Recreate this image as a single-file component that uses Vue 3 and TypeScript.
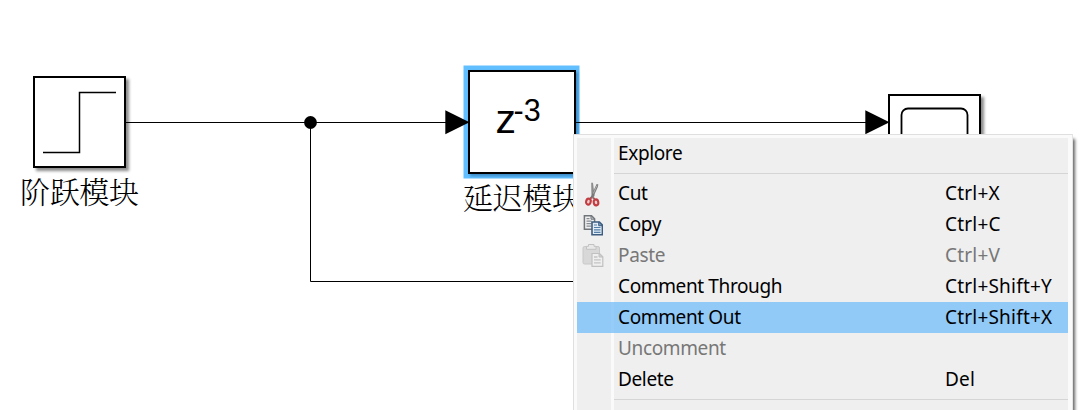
<script setup lang="ts">
interface MenuEntry {
  label: string
  shortcut?: string
  icon?: 'cut' | 'copy' | 'paste'
  disabled?: boolean
  active?: boolean
}

const groups: MenuEntry[][] = [
  [{ label: 'Explore' }],
  [
    { label: 'Cut', shortcut: 'Ctrl+X', icon: 'cut' },
    { label: 'Copy', shortcut: 'Ctrl+C', icon: 'copy' },
    { label: 'Paste', shortcut: 'Ctrl+V', icon: 'paste', disabled: true },
    { label: 'Comment Through', shortcut: 'Ctrl+Shift+Y' },
    { label: 'Comment Out', shortcut: 'Ctrl+Shift+X', active: true },
    { label: 'Uncomment', disabled: true },
    { label: 'Delete', shortcut: 'Del' },
  ],
]
</script>

<template>
  <main class="canvas">
    <svg class="diagram" width="1083" height="410" viewBox="0 0 1083 410">
      <defs>
        <filter id="block-shadow" x="-20%" y="-20%" width="150%" height="150%">
          <feDropShadow dx="3" dy="3" stdDeviation="1.8" flood-color="#000" flood-opacity="0.45" />
        </filter>
        <filter id="selected-shadow" x="-20%" y="-20%" width="150%" height="150%">
          <feDropShadow dx="2" dy="2" stdDeviation="1.5" flood-color="#053a66" flood-opacity="0.4" />
        </filter>
      </defs>

      <!-- Selection halo -->
      <rect x="463.5" y="65.5" width="116" height="113" fill="#62bfff" />

      <!-- Signal lines -->
      <path class="wire" d="M125 122.5H450M575 122.5H870M310.5 122.5V281.5H600" />
      <circle cx="310.5" cy="122.5" r="6.4" />

      <!-- Step block -->
      <rect class="block" x="34" y="77" width="91" height="90" />
      <path class="step" d="M43 152.5H79.5V92.5H116" />
      <text class="name" x="20" y="203" textLength="119">阶跃模块</text>

      <!-- Delay block -->
      <rect class="block selected" x="469" y="71" width="106" height="102" />
      <text class="formula" x="495.5" y="133" font-size="41">z</text>
      <text class="formula" x="513.5" y="121" font-size="30.5">-3</text>
      <text class="name" x="463" y="209" textLength="119">延迟模块</text>

      <!-- Scope block -->
      <rect class="block" x="889" y="95" width="91" height="90" />
      <rect class="screen" x="901.5" y="108.5" width="66" height="50" rx="6.5" />

      <path d="M445.3 110.3L469.5 122.3L445.3 134.3Z" />
      <path d="M865.3 110.3L889.5 122.3L865.3 134.3Z" />
    </svg>

    <nav class="menu">
      <template v-for="(group, g) in groups" :key="g">
        <div
          v-for="item in group"
          :key="item.label"
          class="row"
          :class="{ disabled: item.disabled, active: item.active }"
        >
          <span class="gutter">
            <svg v-if="item.icon === 'cut'" width="20" height="26" viewBox="0 0 20 26">
              <path d="M8.2 1.8L10 1.8L11.6 14.5L10.3 17.5L8.4 13Z" fill="#8c8c8c" />
              <path d="M13.6 3L15.4 3.5L14.6 6.5L9.4 17.8L7.2 17Z" fill="#777" />
              <path d="M10.3 12.5L14 4.5" stroke="#b5b5b5" stroke-width=".9" />
              <g fill="#eecfd0" stroke="#c23c42" stroke-width="2.1">
                <ellipse cx="5.4" cy="20.6" rx="2.3" ry="3" transform="rotate(16 5.4 20.6)" />
                <ellipse cx="13" cy="21.4" rx="2.3" ry="3" transform="rotate(-10 13 21.4)" />
              </g>
              <path d="M6.8 17.8l1.8-1.3M12 18.3l-1.8-1.6" stroke="#a85256" stroke-width="1.7" />
            </svg>
            <svg v-else-if="item.icon === 'copy'" width="20" height="22" viewBox="0 0 20 22">
              <path d="M1.4 1.7H8.5L11.6 4.8V15.2H1.4Z" fill="#f1f1f1" stroke="#70757a" stroke-width="1.5" />
              <path d="M8 1.7V5.2H11.6Z" fill="#c4c9cd" stroke="#70757a" />
              <path d="M3.5 4.7h3M3.5 7.2h5M3.5 9.7h5M3.5 12.2h5" stroke="#858b90" stroke-width="1.2" />
              <path d="M9 8H16.4L19.4 11V20.8H9Z" fill="#e0ebf6" stroke="#3d5d80" stroke-width="1.6" />
              <path d="M15.7 8V11.7H19.4Z" fill="#7fa3c8" stroke="#3d5d80" />
              <path d="M11 11h3M11 13.5h6.5M11 15.9h6.5M11 18.3h6.5" stroke="#557fa9" stroke-width="1.2" />
            </svg>
            <svg v-else-if="item.icon === 'paste'" width="22" height="25" viewBox="0 0 22 25">
              <rect x="1" y="3.5" width="16.5" height="17.5" rx="1.5" fill="#d8d8d8" stroke="#c8c8c8" />
              <path d="M4.5 6.3V3.3H6.5V1.5H12V3.3H14V6.3Z" fill="#e9e9e9" stroke="#c2c2c2" />
              <path d="M10 10.5H17.5L20.8 13.7V23.3H10Z" fill="#efefef" stroke="#c0c0c0" stroke-width="1.2" />
              <path d="M17 10.5V14H20.8Z" fill="#d2d2d2" stroke="#c0c0c0" />
              <path d="M12 14h3.5M12 16.9h6.7M12 19.8h6.7" stroke="#c4c4c4" stroke-width="1.3" />
            </svg>
          </span>
          <span class="label">{{ item.label }}</span>
          <span class="shortcut">{{ item.shortcut }}</span>
        </div>
        <div class="separator"></div>
      </template>
    </nav>
  </main>
</template>

<style scoped>
.canvas {
  position: relative;
  width: 1083px;
  height: 410px;
  overflow: hidden;
  background: #fff;
}
.diagram {
  display: block;
}
.wire {
  fill: none;
  stroke: #000;
  stroke-width: 1;
}
.block {
  fill: #fff;
  stroke: #000;
  stroke-width: 2;
  filter: url(#block-shadow);
}
.selected {
  filter: url(#selected-shadow);
}
.step {
  fill: none;
  stroke: #000;
  stroke-width: 1.5;
}
.screen {
  fill: none;
  stroke: #000;
  stroke-width: 1.8;
}
.name {
  font: 300 30px 'SimSun', 'Noto Serif CJK SC', 'Noto Sans CJK SC', serif;
}
.formula {
  font-family: 'Liberation Sans', Arial, sans-serif;
}
.menu {
  position: absolute;
  left: 573px;
  top: 134px;
  width: 500px;
  height: 300px;
  box-sizing: border-box;
  padding: 3px 4px 3px 3px;
  border: 1px solid #dfdfdf;
  border-right-color: #e4e4e4;
  background: linear-gradient(90deg, #efefef 34px, #fafafa 34px, #fafafa 37px, #efefef 37px) content-box, #fafafa;
  box-shadow: 3px 4px 3px -1px rgba(0, 0, 0, 0.6);
  font-family: 'Noto Sans', 'Open Sans', sans-serif;
  font-size: 19px;
  color: #000;
}
.row {
  display: grid;
  grid-template-columns: 41px 327px 1fr;
  align-items: center;
  height: 31px;
  line-height: 31px;
  white-space: nowrap;
}
.gutter {
  display: flex;
  align-items: center;
  justify-content: center;
  width: 32px;
  height: 31px;
}
.label {
  letter-spacing: -0.37px;
}
.shortcut {
  letter-spacing: 0.2px;
}
.disabled {
  color: #777;
}
.active {
  background: linear-gradient(90deg, #91c9f7 34px, #96ccf8 34px, #96ccf8 37px, #91c9f7 37px);
}
.separator {
  height: 1px;
  margin: 4px 0 4px 37px;
  background: #d5d5d5;
}
</style>
